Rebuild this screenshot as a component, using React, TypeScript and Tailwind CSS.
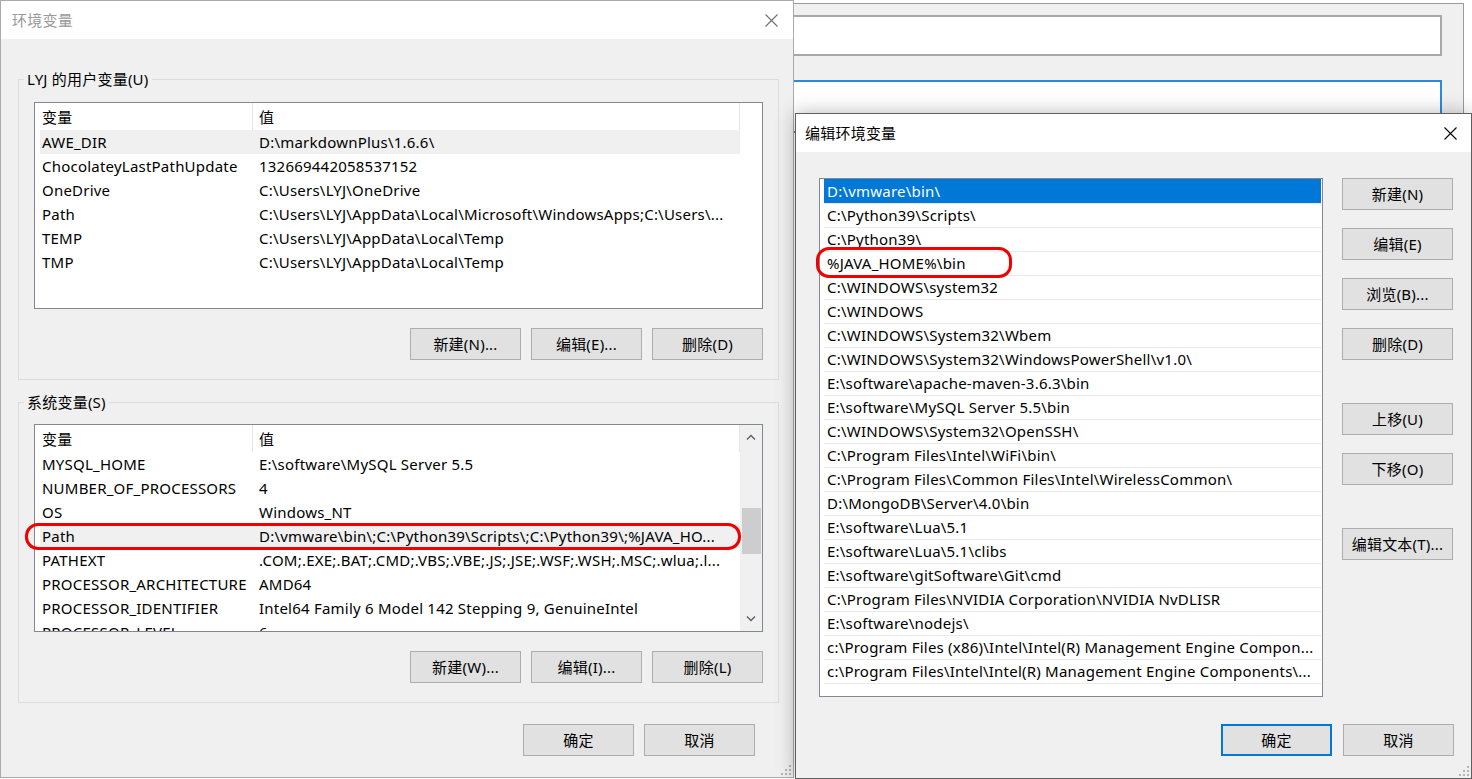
import React from 'react';

type Row = [string, string];

const userVars: Row[] = [
  ['AWE_DIR', 'D:\\markdownPlus\\1.6.6\\'],
  ['ChocolateyLastPathUpdate', '132669442058537152'],
  ['OneDrive', 'C:\\Users\\LYJ\\OneDrive'],
  ['Path', 'C:\\Users\\LYJ\\AppData\\Local\\Microsoft\\WindowsApps;C:\\Users\\...'],
  ['TEMP', 'C:\\Users\\LYJ\\AppData\\Local\\Temp'],
  ['TMP', 'C:\\Users\\LYJ\\AppData\\Local\\Temp'],
];

const sysVars: Row[] = [
  ['MYSQL_HOME', 'E:\\software\\MySQL Server 5.5'],
  ['NUMBER_OF_PROCESSORS', '4'],
  ['OS', 'Windows_NT'],
  ['Path', 'D:\\vmware\\bin\\;C:\\Python39\\Scripts\\;C:\\Python39\\;%JAVA_HO...'],
  ['PATHEXT', '.COM;.EXE;.BAT;.CMD;.VBS;.VBE;.JS;.JSE;.WSF;.WSH;.MSC;.wlua;.l...'],
  ['PROCESSOR_ARCHITECTURE', 'AMD64'],
  ['PROCESSOR_IDENTIFIER', 'Intel64 Family 6 Model 142 Stepping 9, GenuineIntel'],
  ['PROCESSOR_LEVEL', '6'],
];

const pathItems = [
  'D:\\vmware\\bin\\',
  'C:\\Python39\\Scripts\\',
  'C:\\Python39\\',
  '%JAVA_HOME%\\bin',
  'C:\\WINDOWS\\system32',
  'C:\\WINDOWS',
  'C:\\WINDOWS\\System32\\Wbem',
  'C:\\WINDOWS\\System32\\WindowsPowerShell\\v1.0\\',
  'E:\\software\\apache-maven-3.6.3\\bin',
  'E:\\software\\MySQL Server 5.5\\bin',
  'C:\\WINDOWS\\System32\\OpenSSH\\',
  'C:\\Program Files\\Intel\\WiFi\\bin\\',
  'C:\\Program Files\\Common Files\\Intel\\WirelessCommon\\',
  'D:\\MongoDB\\Server\\4.0\\bin',
  'E:\\software\\Lua\\5.1',
  'E:\\software\\Lua\\5.1\\clibs',
  'E:\\software\\gitSoftware\\Git\\cmd',
  'C:\\Program Files\\NVIDIA Corporation\\NVIDIA NvDLISR',
  'E:\\software\\nodejs\\',
  'c:\\Program Files (x86)\\Intel\\Intel(R) Management Engine Compon...',
  'c:\\Program Files\\Intel\\Intel(R) Management Engine Components\\...',
];

function CloseIcon({ color }: { color: string }) {
  return (
    <svg width="13" height="13" viewBox="0 0 13 13" fill="none" stroke={color} strokeWidth="1.1">
      <path d="M0.5 0.5L12.5 12.5M12.5 0.5L0.5 12.5" />
    </svg>
  );
}

function Grip() {
  return (
    <svg width="12" height="12" viewBox="0 0 12 12" fill="#b5b5b5">
      <rect x="9" y="1" width="2" height="2" />
      <rect x="9" y="5" width="2" height="2" />
      <rect x="5" y="5" width="2" height="2" />
      <rect x="9" y="9" width="2" height="2" />
      <rect x="5" y="9" width="2" height="2" />
      <rect x="1" y="9" width="2" height="2" />
    </svg>
  );
}

function Btn({ children, focused = false }: { children: React.ReactNode; focused?: boolean }) {
  return (
    <div
      className={
        focused
          ? 'h-[32px] w-[111px] shrink-0 flex items-center justify-center bg-[#e1e1e1] border-2 border-[#0078d7]'
          : 'h-[32px] w-[111px] shrink-0 flex items-center justify-center bg-[#e1e1e1] border border-[#adadad]'
      }
    >
      {children}
    </div>
  );
}

function Scrollbar() {
  return (
    <div className="w-[22px] bg-[#f0f0f0] flex flex-col items-center">
      <div className="h-[24px] w-full flex items-center justify-center">
        <svg width="10" height="6" viewBox="0 0 10 6" fill="none" stroke="#606060" strokeWidth="1.4">
          <path d="M1 5.5L5 1.5L9 5.5" />
        </svg>
      </div>
      <div className="h-[59px]" />
      <div className="h-[46px] w-[19px] bg-[#cdcdcd]" />
      <div className="flex-1" />
      <div className="h-[24px] w-full flex items-center justify-center">
        <svg width="10" height="6" viewBox="0 0 10 6" fill="none" stroke="#606060" strokeWidth="1.4">
          <path d="M1 0.5L5 4.5L9 0.5" />
        </svg>
      </div>
    </div>
  );
}

function ListView({ rows, selected, scroll, tall }: { rows: Row[]; selected: number; scroll?: boolean; tall?: boolean }) {
  return (
    <div className={tall ? 'h-[208px] flex border border-[#828790] bg-white overflow-hidden' : 'h-[207px] flex border border-[#828790] bg-white overflow-hidden'}>
      <div className="w-[705px] flex flex-col overflow-hidden">
        <div className="h-[27px] shrink-0 flex">
          <div className="w-[217px] pl-[7px] flex items-center">变量</div>
          <div className="flex-1 flex items-center pl-[6px] border-l border-r border-[#e5e5e5]">值</div>
        </div>
        {rows.map(([name, value], i) => (
          <div
            key={name + i}
            className={
              i === selected
                ? 'ml-[5px] w-[700px] h-[24px] shrink-0 flex items-center bg-[#f0f0f0]'
                : 'ml-[5px] w-[700px] h-[24px] shrink-0 flex items-center'
            }
          >
            <div className="w-[219px] shrink-0 pl-[2px] whitespace-nowrap overflow-hidden">{name}</div>
            <div className="flex-1 min-w-0 pr-[4px] whitespace-nowrap overflow-hidden text-ellipsis">{value}</div>
          </div>
        ))}
      </div>
      {scroll ? <Scrollbar /> : null}
    </div>
  );
}

function GroupBox({ label, children }: { label: string; children: React.ReactNode }) {
  return (
    <div className="relative w-[761px] border border-[#dcdcdc] px-[15px] pt-[22px] pb-[19px]">
      <div className="absolute -top-[11px] left-[5px] bg-[#f0f0f0] px-[3px] leading-[20px]">{label}</div>
      {children}
    </div>
  );
}

function EnvWindow() {
  return (
    <div className="absolute left-0 top-0 w-[794px] h-[778px] border border-[#aaaaaa] bg-[#f0f0f0] flex flex-col">
      <div className="h-[38px] shrink-0 bg-white flex items-center justify-between pl-[11px] pr-[15px]">
        <span className="text-[#9a9a9a]">环境变量</span>
        <CloseIcon color="#6f6f6f" />
      </div>
      <div className="flex flex-col pl-[17px] pt-[40px]">
        <GroupBox label="LYJ 的用户变量(U)">
          <ListView rows={userVars} selected={0} />
          <div className="flex justify-end gap-[10px] mt-[19px]">
            <Btn>新建(N)...</Btn>
            <Btn>编辑(E)...</Btn>
            <Btn>删除(D)</Btn>
          </div>
        </GroupBox>
        <div className="mt-[22px]">
          <GroupBox label="系统变量(S)">
            <div className="-mt-px">
              <ListView rows={sysVars} selected={3} scroll tall />
            </div>
            <div className="flex justify-end gap-[10px] mt-[19px]">
              <Btn>新建(W)...</Btn>
              <Btn>编辑(I)...</Btn>
              <Btn>删除(L)</Btn>
            </div>
          </GroupBox>
        </div>
        <div className="w-[761px] flex justify-end gap-[10px] mt-[21px] pr-[24px]">
          <Btn>确定</Btn>
          <Btn>取消</Btn>
        </div>
      </div>
      <div className="flex-1 flex items-end justify-end pr-[1px] pb-[1px]">
        <Grip />
      </div>
    </div>
  );
}

function EditWindow() {
  return (
    <div className="absolute left-[795px] top-[113px] w-[677px] h-[666px] border border-[#5f5f5f] bg-[#f0f0f0] flex flex-col shadow-[0_0_18px_rgba(0,0,0,0.28)]">
      <div className="h-[38px] shrink-0 bg-white flex items-center justify-between pl-[9px] pr-[14px]">
        <span>编辑环境变量</span>
        <CloseIcon color="#000000" />
      </div>
      <div className="flex flex-col pl-[23px] pr-[17px] pt-[26px]">
        <div className="flex gap-[19px]">
          <div className="w-[504px] h-[519px] shrink-0 border border-[#828790] bg-white flex flex-col pl-[4px] pr-[1px]">
            {pathItems.map((p, i) => (
              <div
                key={p}
                className={
                  i === 0
                    ? 'h-[24px] shrink-0 flex items-center pl-[3px] bg-[#0078d7] text-white whitespace-nowrap overflow-hidden'
                    : 'h-[24px] shrink-0 flex items-center pl-[3px] pb-px border-t border-[#eaeaea] whitespace-nowrap overflow-hidden'
                }
              >
                {p}
              </div>
            ))}
            <div className="border-t border-[#eaeaea]" />
          </div>
          <div className="flex flex-col">
            <Btn>新建(N)</Btn>
            <div className="h-[18px]" />
            <Btn>编辑(E)</Btn>
            <div className="h-[18px]" />
            <Btn>浏览(B)...</Btn>
            <div className="h-[18px]" />
            <Btn>删除(D)</Btn>
            <div className="h-[43px]" />
            <Btn>上移(U)</Btn>
            <div className="h-[18px]" />
            <Btn>下移(O)</Btn>
            <div className="h-[43px]" />
            <Btn>编辑文本(T)...</Btn>
          </div>
        </div>
        <div className="flex justify-end gap-[11px] mt-[27px]">
          <Btn focused>确定</Btn>
          <Btn>取消</Btn>
        </div>
      </div>
      <div className="flex-1 flex items-end justify-end pr-[1px] pb-[1px]">
        <Grip />
      </div>
    </div>
  );
}

function BackWindow() {
  return (
    <div className="absolute left-[760px] top-[3px] w-[704px] h-[130px] border-t border-r border-[#9a9a9a] bg-[#f0f0f0] flex flex-col pt-[11px] pr-[21px]">
      <div className="h-[47px] border-2 border-[#a8a8a8] bg-white" />
      <div className="h-[60px] mt-[24px] border-2 border-[#2b8ae0] bg-white" />
    </div>
  );
}

export default function App() {
  return (
    <div className="relative w-[1472px] h-[779px] overflow-hidden bg-white text-black text-[15px] leading-[20px] tracking-[0.22px] font-['Noto_Sans','Noto_Sans_CJK_SC',sans-serif]">
      <BackWindow />
      <EnvWindow />
      <EditWindow />
      <div className="absolute left-[25px] top-[523px] w-[716px] h-[27px] border-[3px] border-[#f00000] rounded-[13px]" />
      <div className="absolute left-[816px] top-[247px] w-[196px] h-[31px] border-[3px] border-[#f00000] rounded-[13px]" />
    </div>
  );
}
